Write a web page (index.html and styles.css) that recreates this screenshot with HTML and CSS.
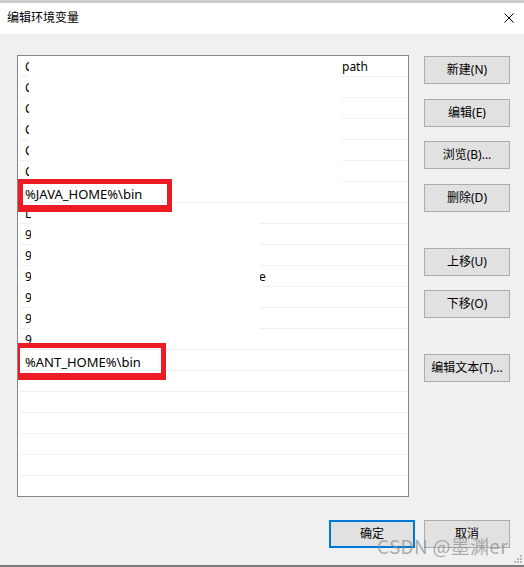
FILE: index.html
```html
<!DOCTYPE html>
<html lang="zh-CN">
<head>
<meta charset="utf-8">
<title>编辑环境变量</title>
<link rel="stylesheet" href="styles.css">
</head>
<body>
<div class="window">
  <div class="topstrip"></div>
  <div class="titlebar">
    <span class="title">编辑环境变量</span>
    <svg class="close" width="10" height="10" viewBox="0 0 10 10"><path d="M0.5 0.5 L9.5 9.5 M9.5 0.5 L0.5 9.5" stroke="#000" stroke-width="1" fill="none"/></svg>
  </div>
  <div class="content">
    <div class="main">
      <div class="listbox">
        <div class="row"><span class="clip">C</span><span class="tail">path</span></div>
        <div class="row"><span class="clip">C</span></div>
        <div class="row"><span class="clip">C</span></div>
        <div class="row"><span class="clip">C</span></div>
        <div class="row"><span class="clip">C</span></div>
        <div class="row"><span class="clip">C</span></div>
        <div class="row"><span class="entry">%JAVA_HOME%\bin</span></div>
        <div class="row"><span class="clip">L</span></div>
        <div class="row"><span class="clip">9</span></div>
        <div class="row"><span class="clip">9</span></div>
        <div class="row"><span class="clip">9</span><span class="tail2">e</span></div>
        <div class="row"><span class="clip">9</span></div>
        <div class="row"><span class="clip">9</span></div>
        <div class="row"><span class="clip">9</span></div>
        <div class="row"><span class="entry">%ANT_HOME%\bin</span></div>
        <div class="row"></div>
        <div class="row"></div>
        <div class="row"></div>
        <div class="row"></div>
        <div class="row"></div>
        <div class="row last"></div>
        <div class="mask mask1"></div>
        <div class="mask mask2"></div>
        <div class="mark mark1"></div>
        <div class="mark mark2"></div>
      </div>
      <div class="sidebuttons">
        <button class="btn b1">新建(N)</button>
        <button class="btn b2">编辑(E)</button>
        <button class="btn b3">浏览(B)...</button>
        <button class="btn b4">删除(D)</button>
        <button class="btn b5">上移(U)</button>
        <button class="btn b6">下移(O)</button>
        <button class="btn b7">编辑文本(T)...</button>
      </div>
    </div>
    <div class="footer">
      <button class="btn primary">确定</button>
      <button class="btn">取消</button>
    </div>
  </div>
  <div class="watermark">CSDN @墨渊er</div>
  <svg class="grip" width="8" height="8" viewBox="0 0 8 8">
    <rect x="6" y="0" width="2" height="2" fill="#b8b8b8"/>
    <rect x="3" y="3" width="2" height="2" fill="#b8b8b8"/>
    <rect x="6" y="3" width="2" height="2" fill="#b8b8b8"/>
    <rect x="0" y="6" width="2" height="2" fill="#b8b8b8"/>
    <rect x="3" y="6" width="2" height="2" fill="#b8b8b8"/>
    <rect x="6" y="6" width="2" height="2" fill="#b8b8b8"/>
  </svg>
</div>
</body>
</html>
```

FILE: styles.css
```css
* { box-sizing: border-box; }
html, body { margin: 0; padding: 0; }
body {
  width: 524px;
  height: 567px;
  overflow: hidden;
  font-family: "Noto Sans", "Noto Sans CJK SC", sans-serif;
  font-size: 12px;
  color: #000;
  background: #f0f0f0;
}
.window {
  position: relative;
  width: 524px;
  height: 567px;
  display: flex;
  flex-direction: column;
  border-bottom: 2px solid #7a7a7a;
}
.topstrip {
  height: 3px;
  background: #cdcdcd;
}
.titlebar {
  height: 31px;
  background: #fff;
  display: flex;
  align-items: center;
  justify-content: space-between;
  padding: 0 10px 0 7px;
}
.title {
  font-family: "Noto Sans CJK SC", sans-serif;
  font-size: 12px;
  line-height: 16px;
  margin-top: -3px;
}
.close { margin-top: -2px; }
.content {
  flex: 1;
  display: flex;
  flex-direction: column;
  padding: 21px 14px 0 17px;
}
.main {
  display: flex;
  gap: 15px;
}
.listbox {
  position: relative;
  width: 392px;
  height: 442px;
  background: #fff;
  border: 1px solid #828790;
  padding: 0 1px;
  overflow: hidden;
}
.row {
  height: 21px;
  border-bottom: 1px solid #f0f0f0;
  display: flex;
  align-items: center;
  padding: 2px 0 0 6px;
  white-space: nowrap;
  position: relative;
}
.row.last { border-bottom: none; }
.row span { line-height: 16px; }
.row .entry {
  font-family: "Noto Sans", sans-serif;
  font-size: 13px;
  margin-top: 2px;
}
.tail {
  position: absolute;
  left: 323px;
}
.tail2 {
  position: absolute;
  left: 240px;
}
.mask {
  position: absolute;
  background: #fff;
}
.mask1 { left: 11px; top: 0; width: 313px; height: 126px; }
.mask2 { left: 13px; top: 148px; width: 229px; height: 126px; }
.mark {
  position: absolute;
  border: 5px solid #ed1c24;
  border-bottom-width: 7px;
}
.mark1 { left: 0; top: 123px; width: 154px; height: 33px; }
.mark2 { left: -3px; top: 287px; width: 151px; height: 37px; }
.sidebuttons {
  display: flex;
  flex-direction: column;
  padding-top: 1px;
}
.btn {
  width: 86px;
  height: 28px;
  background: #e1e1e1;
  border: 1px solid #adadad;
  border-radius: 0;
  font-family: "Noto Sans", "Noto Sans CJK SC", sans-serif;
  font-size: 12px;
  color: #000;
  padding: 0;
  line-height: 16px;
}
.b2 { margin-top: 15px; }
.b3 { margin-top: 14px; }
.b4 { margin-top: 15px; }
.b5 { margin-top: 36px; }
.b6 { margin-top: 14px; }
.b7 { margin-top: 36px; }
.footer {
  margin-top: 23px;
  display: flex;
  justify-content: flex-end;
  gap: 9px;
}
.btn.primary {
  border: 2px solid #0078d7;
}
.watermark {
  position: absolute;
  left: 377px;
  top: 533px;
  font-family: "Noto Sans CJK SC", "Noto Sans", sans-serif;
  font-size: 19px;
  line-height: 26px;
  color: rgba(140, 140, 140, 0.7);
  letter-spacing: 0.3px;
  white-space: nowrap;
  pointer-events: none;
}
.grip {
  position: absolute;
  right: 2px;
  bottom: 2px;
}
```
